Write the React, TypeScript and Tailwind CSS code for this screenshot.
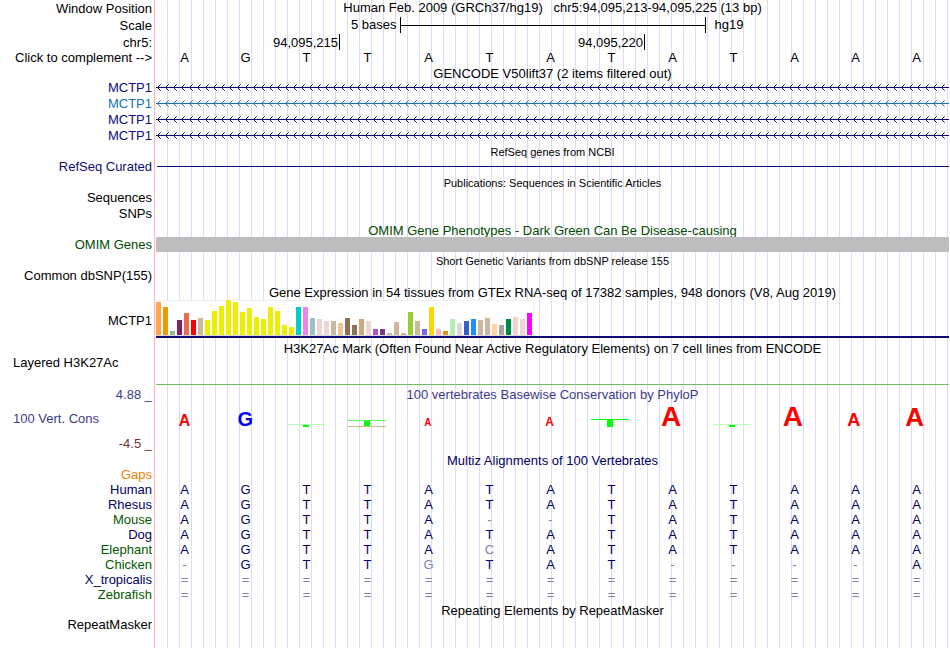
import type { ReactNode } from "react"

// label column is 154px, each base takes 1/13 of the track area
const rowClass = "grid grid-cols-[154px_1fr]"

const sequence = "AGTTATATATAAA".split("")

const genes = [
	{ id: "gene-1", label: "text-[#0c0c78]", color: "#0c0c78" },
	{ id: "gene-2", label: "text-[#1874b4]", color: "#1874b4" },
	{ id: "gene-3", label: "text-[#0c0c78]", color: "#0c0c78" },
	{ id: "gene-4", label: "text-[#0c0c78]", color: "#0c0c78" },
]

// [color, height in px] for the 54 GTEx tissues
const tissues: [string, number][] = [
	["#ffa54f", 33], ["#ee9a00", 28], ["#8fbc8f", 4], ["#8b1c62", 15],
	["#ee6a50", 22], ["#ff0000", 15], ["#cdb79e", 17], ["#eeee00", 15],
	["#eeee00", 24], ["#eeee00", 29], ["#eeee00", 35], ["#eeee00", 33],
	["#eeee00", 23], ["#eeee00", 27], ["#eeee00", 18], ["#eeee00", 16],
	["#eeee00", 28], ["#eeee00", 24], ["#eeee00", 10], ["#eeee00", 8],
	["#00cdcd", 28], ["#ee82ee", 28], ["#9ac0cd", 17], ["#eed5d2", 16],
	["#eed5d2", 14], ["#cdb79e", 14], ["#eec591", 12], ["#8b7355", 17],
	["#8b7355", 10], ["#cdaa7d", 16], ["#eed5d2", 14], ["#b452cd", 6],
	["#7a378b", 6], ["#cdb79e", 2], ["#cdb79e", 13], ["#cdb79e", 2],
	["#9acd32", 23], ["#cdb79e", 14], ["#7a67ee", 6], ["#ffd700", 28],
	["#ffb6c1", 6], ["#cd9b1d", 4], ["#b4eeb4", 16], ["#d9d9d9", 12],
	["#3a5fcd", 14], ["#1e90ff", 16], ["#cdb79e", 15], ["#cdb79e", 17],
	["#ffd39b", 11], ["#a6a6a6", 10], ["#008b45", 16], ["#eed5d2", 18],
	["#eed5d2", 16], ["#ff00ff", 22],
]

type Score = { base?: string; style?: string; bar?: number; line?: string; under?: boolean }

const conservation: Score[] = [
	{ base: "A", style: "text-[16px] text-[#ff0000]" },
	{ base: "G", style: "text-[20px] text-[#0000ff]" },
	{ bar: 2, line: "bg-[#b4ffb4]" },
	{ bar: 5, line: "bg-[#55ff55]", under: true },
	{ base: "A", style: "text-[10px] text-[#ff0000]" },
	{},
	{ base: "A", style: "text-[12px] text-[#ff0000]" },
	{ bar: 7, line: "bg-[#00ff00]" },
	{ base: "A", style: "text-[28px] text-[#ff0000]" },
	{ bar: 2, line: "bg-[#b4ffb4]" },
	{ base: "A", style: "text-[28px] text-[#ff0000]" },
	{ base: "A", style: "text-[18px] text-[#ff0000]" },
	{ base: "A", style: "text-[26px] text-[#ff0000]" },
]

const species = [
	{ name: "Human", color: "text-[#000064]", bases: "AGTTATATATAAA" },
	{ name: "Rhesus", color: "text-[#000064]", bases: "AGTTATATATAAA" },
	{ name: "Mouse", color: "text-[#005a00]", bases: "AGTTA--TATAAA" },
	{ name: "Dog", color: "text-[#000064]", bases: "AGTTATATATAAA" },
	{ name: "Elephant", color: "text-[#005a00]", bases: "AGTTACATATAAA" },
	{ name: "Chicken", color: "text-[#005a00]", bases: "-GTTGTAT----A" },
	{ name: "X_tropicalis", color: "text-[#000064]", bases: "=============" },
	{ name: "Zebrafish", color: "text-[#005a00]", bases: "=============" },
]

function Label({ children, className = "" }: { children?: ReactNode; className?: string }) {
	return <div className={`pr-0.5 text-right ${className}`}>{children}</div>
}

function Title({ children, className = "" }: { children: ReactNode; className?: string }) {
	return (
		<div className={`${rowClass} h-[15px]`}>
			<h2 className={`col-start-2 pl-0.5 text-center ${className}`}>{children}</h2>
		</div>
	)
}

function GeneArrows({ id, color }: { id: string; color: string }) {
	return (
		<div className="pl-0.5">
			<svg className="block h-[15px] w-full" shapeRendering="crispEdges" aria-hidden="true">
				<defs>
					<pattern id={id} width="8" height="15" patternUnits="userSpaceOnUse">
						<path d="M0 7h8v1H0zM2 6h1v1H2zM3 5h1v1H3zM2 8h1v1H2zM3 9h1v1H3z" fill={color} />
						<path d="M4 4h1v1H4zM4 10h1v1H4z" fill={color} opacity="0.6" />
					</pattern>
				</defs>
				<rect width="100%" height="15" fill={`url(#${id})`} />
			</svg>
		</div>
	)
}

export default function App() {
	return (
		<main className="min-h-screen bg-white pr-px font-['Liberation_Sans',Arial,sans-serif] text-[13px] leading-[15px] text-black">
			<div className="min-h-screen bg-[linear-gradient(to_right,#fff_154px,#ffb4b4_154px,#ffb4b4_155px,#fff_155px,#fff_156px,transparent_156px),repeating-linear-gradient(to_right,transparent_0px,transparent_11px,#dcdcfa_11px,#dcdcfa_12px)]">
				<div className={`${rowClass} h-[17px]`}>
					<Label className="pt-px">Window Position</Label>
					<h1 className="whitespace-pre pl-0.5 text-center">
						{"Human Feb. 2009 (GRCh37/hg19)   chr5:94,095,213-94,095,225 (13 bp)"}
					</h1>
				</div>

				<div className={`${rowClass} h-[17px]`}>
					<Label className="pt-px">Scale</Label>
					<div className="grid grid-cols-[1fr_306px_1fr] pl-0.5">
						<div className="pr-[3px] text-right">5 bases</div>
						<div className="flex h-4 items-center border-x border-black">
							<div className="h-px w-full bg-black" />
						</div>
						<div className="pl-[9px]">hg19</div>
					</div>
				</div>

				<div className={`${rowClass} h-4`}>
					<Label className="pt-px">chr5:</Label>
					<div className="grid h-[15px] grid-cols-13 pl-0.5">
						<div className="col-span-3 pr-px pt-px text-right">94,095,215</div>
						<div className="col-span-5 border-l border-black pr-px pt-px text-right">
							94,095,220
						</div>
						<div className="col-span-5 border-l border-black" />
					</div>
				</div>

				<div className={`${rowClass} h-[15px]`}>
					<button type="button" className="pr-0.5 text-right">
						Click to complement --&gt;
					</button>
					<div className="grid grid-cols-13 pr-0.5 text-center">
						{sequence.map((base, i) => (
							<span key={i}>{base}</span>
						))}
					</div>
				</div>

				<Title className="pt-px">GENCODE V50lift37 (2 items filtered out)</Title>
				{genes.map((gene) => (
					<div key={gene.id} className={`${rowClass} h-4`}>
						<Label className={gene.label}>MCTP1</Label>
						<GeneArrows id={gene.id} color={gene.color} />
					</div>
				))}

				<Title className="pt-px text-[11px]">RefSeq genes from NCBI</Title>
				<div className={`${rowClass} h-4`}>
					<Label className="text-[#0c0c78]">RefSeq Curated</Label>
					<div className="flex h-[15px] items-center pl-[3px]">
						<div className="h-px w-full bg-[#0c0c78]" />
					</div>
				</div>

				<Title className="pt-px text-[11px]">
					Publications: Sequences in Scientific Articles
				</Title>
				<div className={`${rowClass} h-4`}>
					<Label>Sequences</Label>
				</div>
				<div className={`${rowClass} h-4`}>
					<Label>SNPs</Label>
				</div>

				<Title className="pt-px text-[#004b00]">
					OMIM Gene Phenotypes - Dark Green Can Be Disease-causing
				</Title>
				<div className={`${rowClass} h-[15px]`}>
					<Label className="text-[#004b00]">OMIM Genes</Label>
					<div className="ml-0.5 bg-[#bebebe]" />
				</div>

				<div className="pt-px">
					<Title className="pt-px text-[11px]">
						Short Genetic Variants from dbSNP release 155
					</Title>
				</div>
				<div className={`${rowClass} h-[17px]`}>
					<Label>Common dbSNP(155)</Label>
				</div>

				<Title>
					Gene Expression in 54 tissues from GTEx RNA-seq of 17382 samples, 948 donors (V8, Aug 2019)
				</Title>
				<div className={`${rowClass} h-[41px]`}>
					<Label className="pt-[13px]">MCTP1</Label>
					<div className="pl-0.5">
						<div className="flex h-9 w-[378px] items-end gap-0.5 border-b border-r border-b-[#d8d8d8] border-r-[#f0f0f0] bg-white shadow-[inset_0_1px_#f0f0f0]">
							{tissues.map(([color, height], i) => (
								<div key={i} className="w-[5px]" style={{ height, backgroundColor: color }} />
							))}
						</div>
						<div className="h-0.5 bg-[#0c0c78]" />
					</div>
				</div>

				<Title>
					H3K27Ac Mark (Often Found Near Active Regulatory Elements) on 7 cell lines from ENCODE
				</Title>
				<div className={`${rowClass} h-[31px]`}>
					<div className="pl-[13px] leading-[13px]">Layered H3K27Ac</div>
					<div className="pl-0.5 pt-7">
						<div className="h-px bg-[#6ebe64]" />
					</div>
				</div>

				<div className={`${rowClass} h-[15px] text-[#3c3c8c]`}>
					<Label>4.88 _</Label>
					<h2 className="pl-0.5 text-center">100 vertebrates Basewise Conservation by PhyloP</h2>
				</div>
				<div className={`${rowClass} h-[51px]`}>
					<div className="flex flex-col gap-2.5 pt-[9px]">
						<div className="pl-[13px] text-[#3c3c8c]">100 Vert. Cons</div>
						<Label className="text-[#783232]">-4.5 _</Label>
					</div>
					{/* letters share a baseline, bars end on it */}
					<div className="grid h-[30px] grid-cols-13 items-baseline pr-1 text-center">
						{conservation.map((item, i) =>
							item.bar ? (
								<div key={i} className="flex h-[25px] flex-col items-center justify-end self-start">
									<div className={`h-px w-[38px] ${item.line}`} />
									<div className="w-1.5 bg-[#00ff00]" style={{ height: item.bar }} />
									{item.under && <div className="h-px w-[38px] bg-[#c3c37d]" />}
								</div>
							) : (
								<span key={i} className={`font-bold leading-[30px] ${item.style ?? ""}`}>
									{item.base}
								</span>
							)
						)}
					</div>
				</div>

				<Title className="text-[#000064]">Multiz Alignments of 100 Vertebrates</Title>
				<div className={`${rowClass} h-[14px]`}>
					<Label className="leading-[14px] text-[#e68200]">Gaps</Label>
				</div>
				<div className="pr-0.5">
					<table className="w-full table-fixed border-collapse">
						<colgroup>
							<col className="w-[154px]" />
							<col span={13} />
						</colgroup>
						<tbody>
							{species.map(({ name, color, bases }) => (
								<tr key={name} className="h-[15px]">
									<th scope="row" className={`p-0 pr-0.5 text-right font-normal ${color}`}>
										{name}
									</th>
									{bases.split("").map((base, i) => (
										<td
											key={i}
											className={`p-0 text-center ${
												base === sequence[i] ? "text-[#000064]" : "text-[#8080b0]"
											}`}
										>
											{base}
										</td>
									))}
								</tr>
							))}
						</tbody>
					</table>
				</div>

				<div className="pt-px">
					<Title>Repeating Elements by RepeatMasker</Title>
				</div>
				<div className={rowClass}>
					<Label className="leading-[13px]">RepeatMasker</Label>
				</div>
			</div>
		</main>
	)
}
